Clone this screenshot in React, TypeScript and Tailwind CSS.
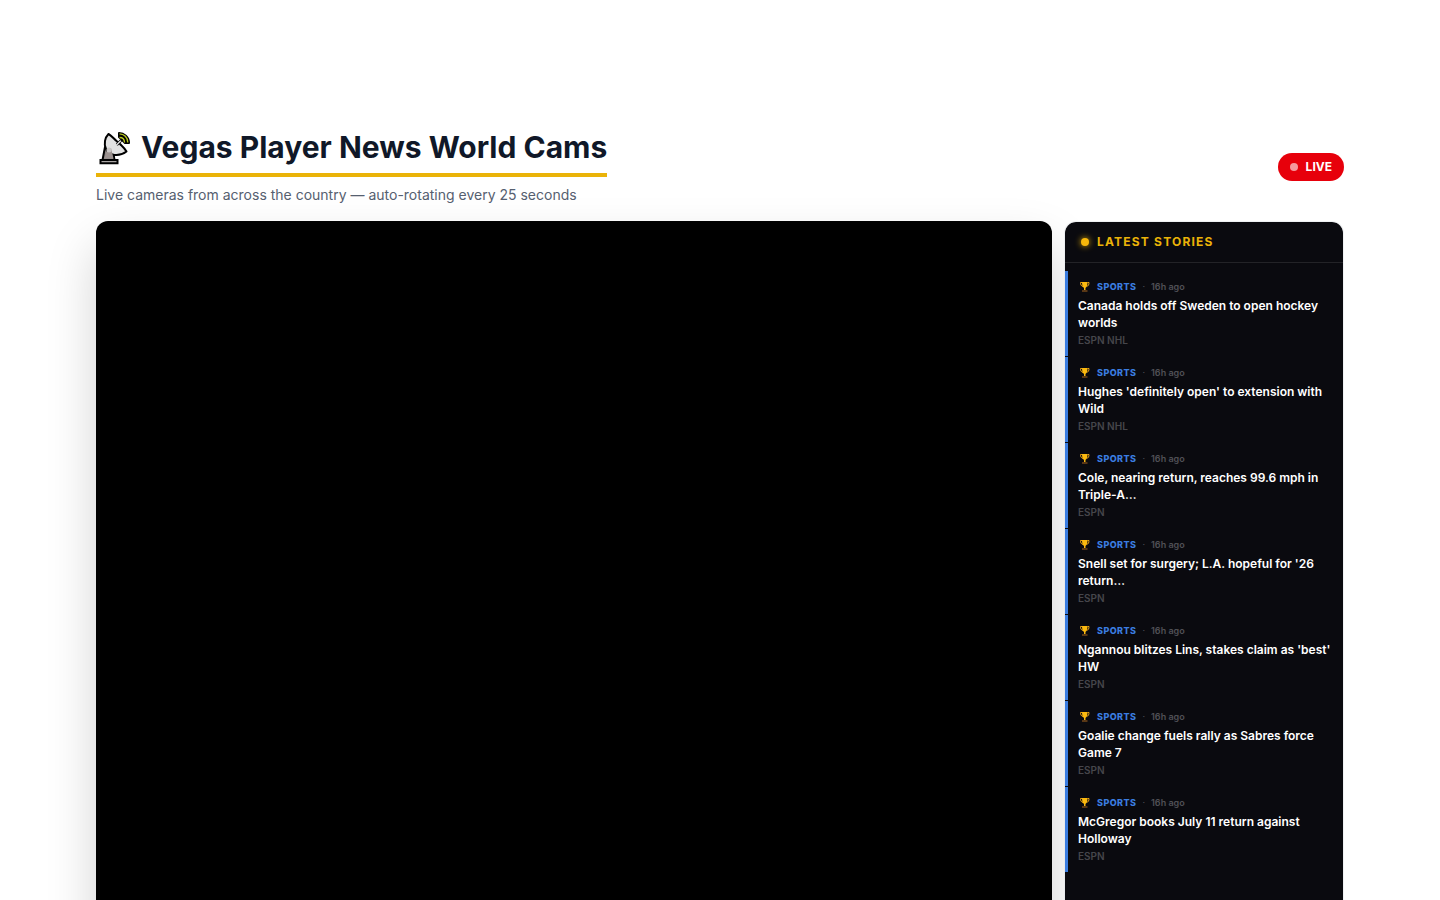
type Story = {
  title: string;
  source: string;
};

const stories: Story[] = [
  { title: "Canada holds off Sweden to open hockey worlds", source: "ESPN NHL" },
  { title: "Hughes 'definitely open' to extension with Wild", source: "ESPN NHL" },
  { title: "Cole, nearing return, reaches 99.6 mph in Triple-A…", source: "ESPN" },
  { title: "Snell set for surgery; L.A. hopeful for '26 return…", source: "ESPN" },
  { title: "Ngannou blitzes Lins, stakes claim as 'best' HW", source: "ESPN" },
  { title: "Goalie change fuels rally as Sabres force Game 7", source: "ESPN" },
  { title: "McGregor books July 11 return against Holloway", source: "ESPN" },
];

const DishIcon = () => (
  <svg viewBox="0 -2 36 38" className="h-[38px] w-9 shrink-0" aria-hidden="true">
    <path d="M9 17 L6.500 30 H18.500 L17.500 24 Z" fill="#8f8785" stroke="#000" strokeWidth="2" strokeLinejoin="round" />
    <path d="M4.500 30 H21.500 V33.200 H4.500 Z" fill="#a9a5a4" stroke="#000" strokeWidth="2" />
    <path
      d="M12.500 4 C9 7.500 7.500 14 10 19 C13 25.500 22.500 27.500 30.500 21.500 C29 18.500 26.500 16.500 24 14 L20.500 11 C18 9 15.500 5.500 12.500 4 Z"
      fill="#e2e2e2"
      stroke="#000"
      strokeWidth="2"
      strokeLinejoin="round"
    />
    <path d="M11 20 L15 18 L17.500 28.500 H8.500 Z" fill="#9b918f" />
    <circle cx="13" cy="20" r="2.500" fill="#c9c6c5" />
    <path d="M21.500 14 L24.500 11" stroke="#000" strokeWidth="3" strokeLinecap="round" />
    <path d="M20.500 15 L24.500 11" stroke="#e2e2e2" strokeWidth="1.500" strokeLinecap="round" />
    <path d="M23 3 C28 3 33 7 33 13 H29 L23 7 Z" fill="#000" stroke="#000" strokeWidth="2" strokeLinejoin="round" />
    <path d="M23.500 3.800 C28 3.800 31.800 7.500 31.800 12.500 M23.500 7.500 C26.500 7.500 28.500 9.500 28.500 12.500" fill="none" stroke="#b7c81d" strokeWidth="1.300" />
  </svg>
);

const TrophyIcon = () => (
  <svg viewBox="0 1 12 12" className="h-3 w-3 shrink-0" aria-hidden="true">
    <path d="M3 2.500 H1.500 C1.500 4.500 2 6 4 6.500 M8.500 2.500 H10 C10 4.500 9.500 6 7.500 6.500" fill="none" stroke="#e8a012" strokeWidth="1" />
    <path d="M3 2 H8.500 C8.500 5 8 7 6.500 8 V10 H5 V8 C3.500 7 3 5 3 2 Z" fill="#fbb90f" />
    <path d="M3 10.500 H8.500 V11.500 H3 Z" fill="#a8651c" />
  </svg>
);

const StoryItem = ({ title, source }: Story) => (
  <li className="border-b border-transparent">
    <a href="#" className="block border-l-3 border-[#3b7de0] px-2.5 pt-2 pb-2">
      <div className="flex h-4 items-center gap-1.5 pl-px text-[9px]">
        <TrophyIcon />
        <span className="font-extrabold tracking-wider text-[#3b7de0]">SPORTS</span>
        <span className="text-[#52525b]">·</span>
        <span className="font-semibold text-[#505056]">16h ago</span>
      </div>
      <h3 className="mt-0.5 text-[12px] leading-[17px] font-semibold text-white">{title}</h3>
      <p className="mt-0.5 text-[10px] leading-[15px] font-semibold text-[#46464b]">{source}</p>
    </a>
  </li>
);

const App = () => {
  return (
    <main className="mx-auto min-h-screen max-w-7xl px-4 pt-32 font-[Inter,sans-serif]">
      <header className="mb-4 flex items-center justify-between">
        <div>
          <h1 className="flex h-[49px] w-fit items-start gap-[9px] border-b-4 border-[#eab308] text-[30px] leading-[38px] font-bold text-gray-900">
            <DishIcon />
            Vegas Player News World Cams
          </h1>
          <p className="mt-2 text-sm text-[#566070]">
            Live cameras from across the country — auto-rotating every 25 seconds
          </p>
        </div>
        <span className="flex h-7 items-center gap-2 rounded-full bg-red-600 px-3 text-xs font-bold text-white">
          <span className="h-2 w-2 rounded-full bg-white/60" />
          LIVE
        </span>
      </header>

      <div className="flex items-stretch gap-3">
        <section
          aria-label="Camera player"
          className="min-h-[720px] flex-1 rounded-xl bg-black shadow-[0_25px_50px_rgba(0,0,0,0.18)]"
        />

        <aside className="w-[280px] overflow-hidden rounded-xl border border-gray-200/60 bg-[#0a0a0f] bg-clip-padding">
          <h2 className="flex h-[41px] items-center gap-2 border-b border-white/10 px-4 text-xs font-bold tracking-widest text-[#eab308]">
            <span className="h-2 w-2 rounded-full bg-[#f8b80a] shadow-[0_0_6px_#eab308]" />
            LATEST STORIES
          </h2>
          <ul className="pt-2">
            {stories.map((story) => (
              <StoryItem key={story.title} {...story} />
            ))}
          </ul>
        </aside>
      </div>
    </main>
  );
};

export default App;
